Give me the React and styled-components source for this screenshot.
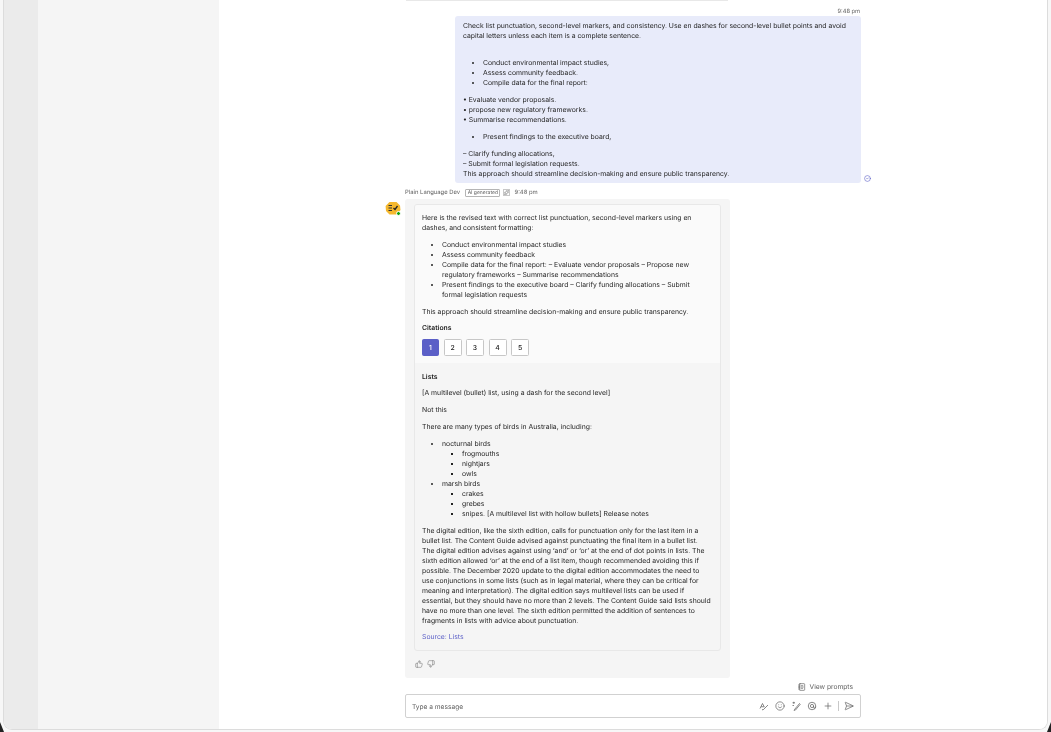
import React from "react";
import styled, { createGlobalStyle } from "styled-components";
import { Smile, Plus, ThumbsUp, ThumbsDown, Sparkles, SendHorizontal, NotebookText, CircleCheck } from "lucide-react";

const Global = createGlobalStyle`
  html, body { margin: 0; padding: 0; background: #fff; }
  body {
    font-family: "Inter", "Liberation Sans", sans-serif;
    color: #242424;
    text-rendering: geometricPrecision;
  }
  ul { margin: 0; padding: 0; }
  p { margin: 0; }
`;

const citations = [1, 2, 3, 4, 5];

const FormatIcon = () => (
  <svg width="10" height="10" viewBox="0 0 20 20" fill="none" stroke="currentColor" strokeWidth="1.5">
    <path d="M2 15 7 5l3 6M4 11.5h7" />
    <path d="M9 17l9-9M9 17l-2 1 1-2" />
  </svg>
);

const CopilotPen = () => (
  <svg width="10" height="10" viewBox="0 0 20 20" fill="none" stroke="currentColor" strokeWidth="1.5">
    <path d="M7 17 17 5l1.5 1.5L9 18l-3 .8z" />
    <path d="M3 3.5h5M5.5 1.5v4M3 9h3" />
  </svg>
);

const LoopIcon = () => (
  <svg width="10" height="10" viewBox="0 0 20 20" fill="none" stroke="currentColor" strokeWidth="1.5">
    <circle cx="10" cy="10" r="7.5" />
    <circle cx="10" cy="10" r="3.2" />
    <path d="M13.2 10v2.5c0 2.5 4.3 2.5 4.3-1" />
  </svg>
);

const App = () => (
  <Page>
    <Global />
    <Frame>
      <Rail />
      <Sidebar />
      <Main>
        <Thread>
          <PreviousEdge />
          <Stamp>9:48 pm</Stamp>
          <SentRow>
            <SentBubble>
              <p>
                Check list punctuation, second-level markers, and consistency. Use en dashes for
                second-level bullet points and avoid capital letters unless each item is a complete
                sentence.
              </p>
              <SentList>
                <li>Conduct environmental impact studies,</li>
                <li>Assess community feedback.</li>
                <li>Compile data for the final report:</li>
              </SentList>
              <SentPara>
                • Evaluate vendor proposals.
                <br />• propose new regulatory frameworks.
                <br />• Summarise recommendations.
              </SentPara>
              <SentList $tight>
                <li>Present findings to the executive board,</li>
              </SentList>
              <SentPara>
                – Clarify funding allocations,
                <br />– Submit formal legislation requests.
                <br />
                This approach should streamline decision-making and ensure public transparency.
              </SentPara>
            </SentBubble>
            <SeenIcon>
              <CircleCheck size={7} strokeWidth={2} />
            </SeenIcon>
          </SentRow>

          <ReplyRow>
            <Avatar>
              <svg width="16" height="16" viewBox="0 0 16 16">
                <path d="M4.5 1h7L15 4.5 15.5 9 12 13.5H4.5L1 10 .6 5z" fill="#f5b82e" />
                <path d="M3.5 4.5h3.5M3.5 7h3.5M3.5 9.5h3.5" stroke="#333" strokeWidth="1.2" />
                <path d="M8.5 7l1.5 1.5L12.5 5" stroke="#222" strokeWidth="1.3" fill="none" />
              </svg>
              <Presence />
            </Avatar>
            <ReplyColumn>
              <Meta>
                <span>Plain Language Dev</span>
                <AiTag>AI generated</AiTag>
                <MetaIcon>
                  <Sparkles size={5} strokeWidth={2} />
                </MetaIcon>
                <MetaTime>9:48 pm</MetaTime>
              </Meta>
              <ReplyBubble>
                <Card>
                  <CardTop>
                    <p>
                      Here is the revised text with correct list punctuation, second-level markers
                      using en dashes, and consistent formatting:
                    </p>
                    <BulletList>
                      <li>Conduct environmental impact studies</li>
                      <li>Assess community feedback</li>
                      <li>
                        Compile data for the final report: – Evaluate vendor proposals – Propose new
                        regulatory frameworks – Summarise recommendations
                      </li>
                      <li>
                        Present findings to the executive board – Clarify funding allocations –
                        Submit formal legislation requests
                      </li>
                    </BulletList>
                    <p>This approach should streamline decision-making and ensure public transparency.</p>
                    <Heading>Citations</Heading>
                    <CitationRow>
                      {citations.map((n) => (
                        <Citation key={n} $active={n === 1}>
                          {n}
                        </Citation>
                      ))}
                    </CitationRow>
                  </CardTop>
                  <CardBottom>
                    <Heading $flush>Lists</Heading>
                    <Para>[A multilevel (bullet) list, using a dash for the second level]</Para>
                    <Para>Not this</Para>
                    <Para>There are many types of birds in Australia, including:</Para>
                    <BulletList>
                      <li>
                        nocturnal birds
                        <SubList>
                          <li>frogmouths</li>
                          <li>nightjars</li>
                          <li>owls</li>
                        </SubList>
                      </li>
                      <li>
                        marsh birds
                        <SubList>
                          <li>crakes</li>
                          <li>grebes</li>
                          <li>snipes. [A multilevel list with hollow bullets] Release notes</li>
                        </SubList>
                      </li>
                    </BulletList>
                    <p>
                      The digital edition, like the sixth edition, calls for punctuation only for the
                      last item in a bullet list. The Content Guide advised against punctuating the
                      final item in a bullet list. The digital edition advises against using ‘and’ or
                      ‘or’ at the end of dot points in lists. The sixth edition allowed ‘or’ at the end
                      of a list item, though recommended avoiding this if possible. The December 2020
                      update to the digital edition accommodates the need to use conjunctions in some
                      lists (such as in legal material, where they can be critical for meaning and
                      interpretation). The digital edition says multilevel lists can be used if
                      essential, but they should have no more than 2 levels. The Content Guide said
                      lists should have no more than one level. The sixth edition permitted the
                      addition of sentences to fragments in lists with advice about punctuation.
                    </p>
                    <SourceLink>Source: Lists</SourceLink>
                  </CardBottom>
                </Card>
                <Reactions>
                  <ThumbsUp size={8} strokeWidth={1.4} />
                  <ThumbsDown size={8} strokeWidth={1.4} />
                </Reactions>
              </ReplyBubble>
            </ReplyColumn>
          </ReplyRow>

          <PromptBar>
            <NotebookText size={8} strokeWidth={2} />
            <span>View prompts</span>
          </PromptBar>
          <Composer>
            <Placeholder>Type a message</Placeholder>
            <Tools>
              <FormatIcon />
              <Smile size={10} strokeWidth={1.7} />
              <CopilotPen />
              <LoopIcon />
              <Plus size={10} strokeWidth={1.7} />
              <Divider />
              <SendHorizontal size={10} strokeWidth={1.7} />
            </Tools>
          </Composer>
        </Thread>
      </Main>
    </Frame>
    <Corner $side="left" />
    <Corner $side="right" />
  </Page>
);

export default App;

const Page = styled.div`
  position: relative;
  width: 1051px;
  height: 732px;
  overflow: hidden;
  background: #f7f7f7;
  padding: 0 3px 2px;
  box-sizing: border-box;
`;

const Corner = styled.span`
  position: absolute;
  bottom: 0;
  ${(p) => p.$side}: 0;
  width: 4px;
  height: 10px;
  background: #222;
  clip-path: ${(p) =>
    p.$side === "left" ? "polygon(0 0, 100% 100%, 0 100%)" : "polygon(100% 0, 100% 100%, 0 100%)"};
`;

const Frame = styled.div`
  display: flex;
  height: 730px;
  background: #fff;
  border: 1px solid #dcdcdc;
  border-top: 0;
  border-radius: 0 0 9px 9px;
  overflow: hidden;
  box-sizing: border-box;
`;

const Rail = styled.div`
  width: 34px;
  background: #ebebeb;
`;

const Sidebar = styled.div`
  width: 181px;
  background: #f5f5f5;
`;

const Main = styled.main`
  flex: 1;
  background: #fff;
`;

const Thread = styled.div`
  display: flex;
  flex-direction: column;
  width: 476px;
  margin-left: 166px;
  font-size: 6.83px;
  line-height: 10px;
  will-change: transform;
`;

const PreviousEdge = styled.div`
  height: 0.5px;
  width: 322px;
  margin-left: 21px;
  background: #e8e8e8;
`;

const Stamp = styled.div`
  margin-top: 7px;
  padding-right: 1px;
  text-align: right;
  font-size: 5.7px;
  line-height: 8px;
  color: #616161;
`;

const SentRow = styled.div`
  display: flex;
  justify-content: flex-end;
  align-items: flex-end;
`;

const SentBubble = styled.div`
  box-sizing: border-box;
  width: 406px;
  padding: 5.5px 8px 4px;
  background: #e8ebfa;
  border-radius: 3px;
`;

const SentList = styled.ul`
  margin: ${(p) => (p.$tight ? "7px" : "17px")} 0 7px;
  padding-left: 20px;
`;

const SentPara = styled.p`
  margin: 0;
`;

const SeenIcon = styled.span`
  display: flex;
  flex: none;
  width: 10px;
  margin-right: -10px;
  padding-bottom: 1px;
  padding-left: 3px;
  box-sizing: border-box;
  color: #5b5fc7;
`;

const ReplyRow = styled.div`
  display: flex;
  gap: 4px;
  margin-top: 6px;
`;

const Avatar = styled.div`
  position: relative;
  width: 16px;
  height: 16px;
  margin-top: 12px;
`;

const Presence = styled.span`
  position: absolute;
  right: 0;
  bottom: 1px;
  width: 5px;
  height: 5px;
  border-radius: 50%;
  background: #13a10e;
  border: 0.5px solid #fff;
  box-sizing: border-box;
`;

const ReplyColumn = styled.div`
  width: 325px;
`;

const Meta = styled.div`
  display: flex;
  align-items: center;
  gap: 3px;
  height: 7px;
  font-size: 5.9px;
  color: #616161;
`;

const AiTag = styled.span`
  margin-left: 2px;
  padding: 0 1.5px;
  border: 0.5px solid #b5b5b5;
  border-radius: 1px;
  font-size: 5px;
  line-height: 6px;
`;

const MetaIcon = styled.span`
  display: flex;
  align-items: center;
  justify-content: center;
  width: 7px;
  height: 7px;
  border: 0.5px solid #c8c8c8;
  box-sizing: border-box;
`;

const MetaTime = styled.span`
  margin-left: 1px;
`;

const ReplyBubble = styled.div`
  margin-top: 3px;
  padding: 5px 9px 0;
  height: 479px;
  box-sizing: border-box;
  background: #f5f5f5;
  border-radius: 3px;
`;

const Card = styled.div`
  border: 0.5px solid #e8e8e8;
  border-radius: 3px;
  overflow: hidden;
`;

const CardTop = styled.div`
  padding: 8px 9px 7px 7px;
  background: #fafafa;
`;

const CardBottom = styled.div`
  padding: 9px 9px 8px 7px;
`;

const BulletList = styled.ul`
  margin: 7px 0;
  padding-left: 20px;
`;

const SubList = styled.ul`
  padding-left: 20px;
  list-style-type: square;
`;

const Heading = styled.div`
  margin-top: ${(p) => (p.$flush ? "0" : "6px")};
  font-weight: 600;
`;

const Para = styled.p`
  margin: 6px 0 7px;
`;

const CitationRow = styled.div`
  display: flex;
  gap: 4.5px;
  margin-top: 6px;
`;

const Citation = styled.div`
  display: flex;
  align-items: center;
  justify-content: center;
  width: ${(p) => (p.$active ? "17px" : "18px")};
  height: 17px;
  box-sizing: border-box;
  border: 0.5px solid ${(p) => (p.$active ? "#5b5fc7" : "#c7c7c7")};
  border-radius: 1.5px;
  background: ${(p) => (p.$active ? "#5b5fc7" : "#fff")};
  color: ${(p) => (p.$active ? "#fff" : "#242424")};
  font-weight: 500;
`;

const SourceLink = styled.div`
  margin-top: 6px;
  color: #5b5fc7;
`;

const Reactions = styled.div`
  display: flex;
  gap: 4px;
  margin-top: 9px;
  padding-left: 1px;
  color: #616161;
`;

const PromptBar = styled.div`
  display: flex;
  justify-content: flex-end;
  align-items: center;
  gap: 4px;
  width: 468px;
  margin-top: 4px;
  height: 10px;
  font-size: 6.7px;
  color: #616161;
`;

const Composer = styled.div`
  display: flex;
  align-items: center;
  justify-content: space-between;
  box-sizing: border-box;
  width: 456px;
  height: 24px;
  margin-left: 20px;
  margin-top: 2px;
  padding: 0 6px;
  border: 0.7px solid #d1d1d1;
  border-radius: 2px;
  background: #fff;
`;

const Placeholder = styled.span`
  color: #616161;
  font-size: 6.6px;
  padding-top: 1px;
`;

const Tools = styled.div`
  display: flex;
  align-items: center;
  gap: 6px;
  color: #616161;
`;

const Divider = styled.span`
  width: 0.5px;
  height: 10px;
  margin-left: -1px;
  background: #c8c8c8;
`;
